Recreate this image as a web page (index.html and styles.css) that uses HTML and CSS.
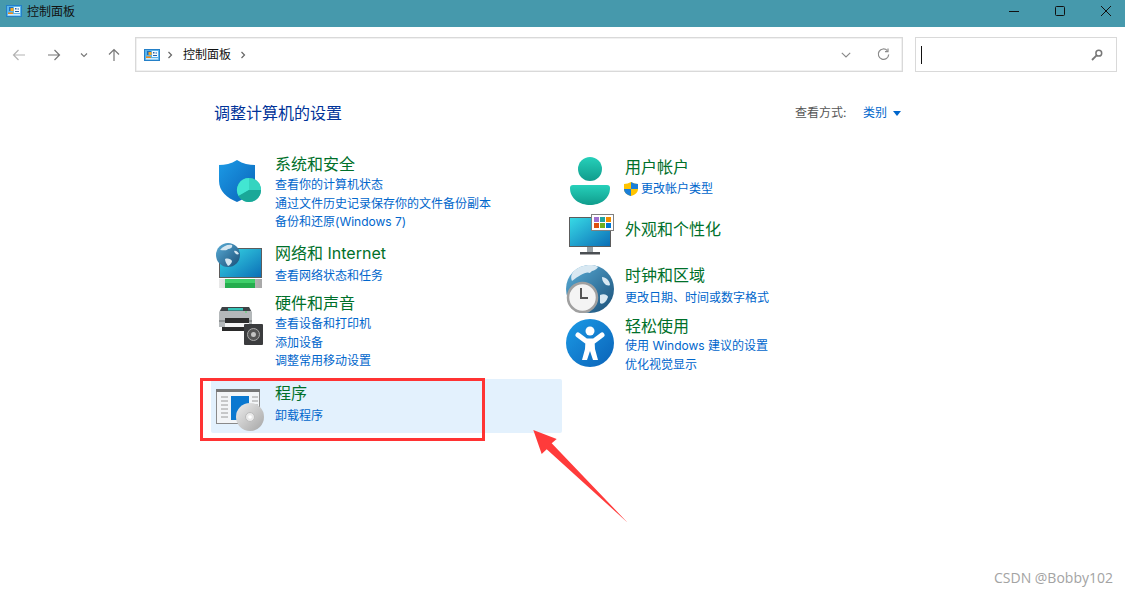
FILE: index.html
```html
<!DOCTYPE html>
<html lang="zh-CN">
<head>
<meta charset="utf-8">
<title>控制面板</title>
<link rel="stylesheet" href="styles.css">
</head>
<body>
<svg class="defs" width="0" height="0" aria-hidden="true">
  <defs>
    <linearGradient id="gBlue" x1="0" y1="0" x2="1" y2="1"><stop offset="0" stop-color="#1c9be6"/><stop offset="1" stop-color="#0a62b8"/></linearGradient>
    <linearGradient id="gScreen" x1="0" y1="0" x2="1" y2="1"><stop offset="0" stop-color="#38dbe6"/><stop offset="1" stop-color="#0b6db6"/></linearGradient>
    <linearGradient id="gTeal" x1="0" y1="0" x2="0" y2="1"><stop offset="0" stop-color="#26d0ba"/><stop offset="1" stop-color="#109c8c"/></linearGradient>
    <linearGradient id="gGlobe" x1="0" y1="0" x2="1" y2="1"><stop offset="0" stop-color="#5aaed8"/><stop offset="1" stop-color="#1a4f78"/></linearGradient>
    <linearGradient id="gDisc" x1="0" y1="0" x2="1" y2="1"><stop offset="0" stop-color="#eeeeee"/><stop offset="1" stop-color="#a5a5a5"/></linearGradient>
    <linearGradient id="gBar" x1="0" y1="0" x2="1" y2="0"><stop offset="0" stop-color="#e8e8e8"/><stop offset="1" stop-color="#a8a8a8"/></linearGradient>
    <symbol id="cp" viewBox="0 0 16 12">
      <rect x="0.500" y="0.500" width="15" height="11" fill="#58b4ec" stroke="#2480c8"/>
      <rect x="8" y="2" width="6" height="6" fill="#f2fafe"/>
      <rect x="2" y="9" width="12" height="1.500" fill="#cfe9fa"/>
      <path d="M3 2h4v4H3z" fill="#1d6fc0"/>
      <path d="M4.500 3h3v3h-3z" fill="#f5a623"/>
      <path d="M2 7.500h5V9H2z" fill="#ef8a17"/>
      <path d="M9 3h1.500v1.500H9zM11.500 3.500H13v1h-1.500zM9 6h4v1H9z" fill="#1f5fa8"/>
    </symbol>
  </defs>
</svg>

<header class="titlebar">
  <div class="title">
    <svg class="title-icon"><use href="#cp"/></svg>
    <span>控制面板</span>
  </div>
  <div class="winctl">
    <svg class="wc" viewBox="0 0 46 27"><path d="M18 11.500h10" stroke="#111" fill="none"/></svg>
    <svg class="wc" viewBox="0 0 46 27"><rect x="18.500" y="6.500" width="9" height="9" rx="1" stroke="#111" fill="none"/></svg>
    <svg class="wc" viewBox="0 0 46 27"><path d="M18 6l10 10M28 6L18 16" stroke="#111" fill="none"/></svg>
  </div>
</header>

<nav class="toolbar">
  <div class="navs">
    <svg class="nav nav-back" viewBox="0 0 14 14"><path d="M13 7H1.500M6.500 2L1.500 7l5 5" fill="none" stroke="#b3b3b3" stroke-width="1.200"/></svg>
    <svg class="nav nav-fwd" viewBox="0 0 14 14"><path d="M1 7h11.500M7.500 2l5 5-5 5" fill="none" stroke="#777" stroke-width="1.200"/></svg>
    <svg class="nav nav-drop" viewBox="0 0 8 6"><path d="M1 1.500l3 3 3-3" fill="none" stroke="#777" stroke-width="1.100"/></svg>
    <svg class="nav nav-up" viewBox="0 0 14 14"><path d="M7 13V1.500M2 6.500l5-5 5 5" fill="none" stroke="#777" stroke-width="1.200"/></svg>
  </div>
  <div class="address">
    <svg class="addr-icon"><use href="#cp"/></svg>
    <svg class="sep sep-first" viewBox="0 0 6 8"><path d="M1.500 1l3 3-3 3" fill="none" stroke="#666" stroke-width="1.200"/></svg>
    <span class="crumb">控制面板</span>
    <svg class="sep" viewBox="0 0 6 8"><path d="M1.500 1l3 3-3 3" fill="none" stroke="#666" stroke-width="1.200"/></svg>
    <span class="grow"></span>
    <svg class="addr-drop" viewBox="0 0 10 6"><path d="M.8.800L5 5 9.200.800" fill="none" stroke="#888" stroke-width="1.100"/></svg>
    <svg class="refresh" viewBox="0 0 13 13"><path d="M10.300 2.600A5.200 5.200 0 1 0 11.700 6.500" fill="none" stroke="#8a8a8a" stroke-width="1.200"/><path d="M11 .6v3H8" fill="none" stroke="#8a8a8a" stroke-width="1.200"/></svg>
  </div>
  <div class="search">
    <span class="caret"></span>
    <svg class="search-icon" viewBox="0 0 12 12"><circle cx="7.800" cy="4.200" r="2.900" fill="none" stroke="#777" stroke-width="1.500"/><path d="M5.600 6.400L1 11" stroke="#777" stroke-width="1.800"/></svg>
  </div>
</nav>

<main class="content">
  <div class="head">
    <h1>调整计算机的设置</h1>
    <div class="view">
      <span class="view-label">查看方式:</span>
      <a class="view-value">类别</a>
      <svg class="view-caret" viewBox="0 0 8 5"><path d="M0 0h8L4 5z" fill="#0066cc"/></svg>
    </div>
  </div>

  <div class="columns">
    <section class="col col-left">
      <article class="item">
        <svg class="icon i-shield" viewBox="0 0 48 48">
          <path d="M21 3C27 7 33 8 39 8V24C39 34 31 41 21 45C11 41 3 34 3 24V8C9 8 15 7 21 3Z" fill="url(#gBlue)"/>
          <circle cx="33" cy="33" r="12" fill="#1fb8a6"/>
          <path d="M33 33V21A12 12 0 0 1 45 33Z" fill="#35d4c0"/>
          <path d="M33 33V21A12 12 0 0 0 22.600 39Z" fill="#42e6d2"/>
          <path d="M33 33L22.600 39A12 12 0 0 0 45 33Z" fill="#1aa898"/>
        </svg>
        <div class="text">
          <h2>系统和安全</h2>
          <a>查看你的计算机状态</a>
          <a>通过文件历史记录保存你的文件备份副本</a>
          <a>备份和还原(Windows 7)</a>
        </div>
      </article>

      <article class="item">
        <svg class="icon i-net" viewBox="0 0 48 48">
          <rect x="3.500" y="6.500" width="42" height="29" fill="url(#gScreen)" stroke="#5c5c5c"/>
          <rect x="3" y="37" width="43" height="9" fill="url(#gBar)"/>
          <rect x="9" y="37" width="30" height="9" fill="#3fd06a"/>
          <rect x="9" y="41" width="30" height="5" fill="#25ad4e"/>
          <circle cx="12" cy="13" r="12" fill="url(#gGlobe)"/>
          <path d="M4 8c3-4 8-6 12-5 1 2-1 4-4 4-1 2-5 1-8 1zM9 17c3-1 6 0 7 2 0 2-3 5-4 5-1-2-3-4-3-7zM18 9c2-1 4 1 5 3-2 1-4 0-5-3z" fill="#d5e6f0"/>
        </svg>
        <div class="text">
          <h2>网络和 Internet</h2>
          <a class="first-2">查看网络状态和任务</a>
        </div>
      </article>

      <article class="item">
        <svg class="icon i-printer" viewBox="0 0 48 48">
          <path d="M6 5H33L36 10V25H3V10Z" fill="#b4b8ba"/>
          <path d="M6 5H33L35 9H4Z" fill="#3d4246"/>
          <rect x="12" y="6" width="15" height="2.500" fill="#35c4b8"/>
          <rect x="3" y="18" width="33" height="2" fill="#8c9092"/>
          <rect x="9" y="16" width="24" height="5" fill="#2c2c2c"/>
          <rect x="9" y="21" width="24" height="4" fill="#f4f4f4"/>
          <rect x="6" y="25" width="30" height="4" fill="#2a2a2a"/>
          <rect x="28" y="22" width="19" height="21" rx="1" fill="#3b3c3e"/>
          <circle cx="37.500" cy="32.500" r="6" fill="#555" stroke="#a8a8a8"/>
          <circle cx="37.500" cy="32.500" r="2.500" fill="#c4c4c4"/>
          <circle cx="30" cy="10" r="0.800" fill="#40e060"/>
        </svg>
        <div class="text">
          <h2>硬件和声音</h2>
          <a>查看设备和打印机</a>
          <a>添加设备</a>
          <a>调整常用移动设置</a>
        </div>
      </article>

      <article class="item item-hover">
        <svg class="icon i-prog" viewBox="0 0 48 48">
          <rect x=".5" y="4.500" width="43" height="34" fill="#f3f5f7" stroke="#8a8a8a"/>
          <rect x="0" y="4" width="44" height="3" fill="#777"/>
          <path d="M5 12h7M5 16h7M5 20h7M5 24h7M5 28h7M5 32h7M36 12h6M36 16h6M36 20h6" stroke="#9a9a9a"/>
          <rect x="15" y="11" width="18" height="24" fill="#0a78d0"/>
          <circle cx="34" cy="32" r="14" fill="url(#gDisc)"/>
          <circle cx="34" cy="32" r="4.500" fill="#e9e9e9" stroke="#bbb"/>
          <circle cx="34" cy="32" r="1.800" fill="#fff"/>
        </svg>
        <div class="text">
          <h2>程序</h2>
          <a class="first-2">卸载程序</a>
        </div>
      </article>
    </section>

    <section class="col col-right">
      <article class="item">
        <svg class="icon i-user" viewBox="0 0 48 48">
          <circle cx="24" cy="12" r="12" fill="url(#gTeal)"/>
          <path d="M4 31Q4 28 7 28H41Q44 28 44 31C44 42 34 48 24 48C14 48 4 42 4 31Z" fill="url(#gTeal)"/>
        </svg>
        <div class="text">
          <h2>用户帐户</h2>
          <a class="first-1 has-shield">
            <svg class="uac" viewBox="0 0 14 14">
              <path d="M7 0C9 1.200 11.500 2 14 2V7C14 10.500 11 13 7 14C3 13 0 10.500 0 7V2C2.500 2 5 1.200 7 0Z" fill="#ffc400"/>
              <path d="M7 0V7H14V2C11.500 2 9 1.200 7 0ZM7 7H0C0 10.500 3 13 7 14Z" fill="#1b7fd8"/>
            </svg>
            更改帐户类型
          </a>
        </div>
      </article>

      <article class="item">
        <svg class="icon i-mon" viewBox="0 0 48 48">
          <rect x="3.500" y="7.500" width="41" height="29" fill="url(#gScreen)" stroke="#5c5c5c"/>
          <rect x="21" y="37" width="6" height="5" fill="#9aa2a6"/>
          <rect x="14" y="42" width="20" height="2.500" fill="#4a4e52"/>
          <rect x="25.500" y="4.500" width="22" height="16" fill="#fff" stroke="#808080"/>
          <rect x="28" y="7" width="5" height="5" fill="#a070d0"/><rect x="34" y="7" width="5" height="5" fill="#20a5a0"/><rect x="40" y="7" width="5" height="5" fill="#f08c00"/>
          <rect x="28" y="13" width="5" height="5" fill="#e05010"/><rect x="34" y="13" width="5" height="5" fill="#70b020"/><rect x="40" y="13" width="5" height="5" fill="#0078d4"/>
        </svg>
        <div class="text text-solo">
          <h2>外观和个性化</h2>
        </div>
      </article>

      <article class="item">
        <svg class="icon i-clock" viewBox="0 0 48 48">
          <circle cx="24" cy="24" r="24" fill="url(#gGlobe)"/>
          <path d="M8 6C14 0 26-2 32 2 30 6 26 5 24 8 20 6 14 10 6 16 4 12 6 8 8 6ZM36 12C40 12 44 16 44 20 41 22 36 18 36 12ZM34 30C38 28 42 30 42 32 40 38 36 40 34 38Z" fill="#d8e8f2"/>
          <circle cx="16.500" cy="32.500" r="14.500" fill="#f4f4f4" stroke="#a0a0a0" stroke-width="2.500"/>
          <path d="M15 23V33H22" fill="none" stroke="#555" stroke-width="2"/>
        </svg>
        <div class="text">
          <h2>时钟和区域</h2>
          <a class="first-2">更改日期、时间或数字格式</a>
        </div>
      </article>

      <article class="item">
        <svg class="icon i-ease" viewBox="0 0 48 48">
          <circle cx="24" cy="24" r="24" fill="url(#gBlue)"/>
          <circle cx="24" cy="12" r="4.500" fill="#fff"/>
          <path d="M12 16L20 22H28L36 16" fill="none" stroke="#fff" stroke-width="5" stroke-linecap="round" stroke-linejoin="round"/>
          <path d="M19.500 21H28.500L29 30L32 41H27L24 32L21 41H16L19 30Z" fill="#fff"/>
        </svg>
        <div class="text">
          <h2>轻松使用</h2>
          <a class="first-0">使用 Windows 建议的设置</a>
          <a>优化视觉显示</a>
        </div>
      </article>
    </section>
  </div>
</main>

<div class="redbox"></div>
<svg class="arrow" viewBox="0 0 100 100"><path d="M3.300 2L26.700 11L21.700 15.300L97.700 94.700L16.700 21.300L11.700 26Z" fill="#ff3b3b"/></svg>
<div class="watermark">CSDN @Bobby102</div>
</body>
</html>
```

FILE: styles.css
```css
* { box-sizing: border-box; }
html, body { margin: 0; height: 100%; }
body {
  position: relative;
  width: 1125px;
  height: 594px;
  overflow: hidden;
  background: #fff;
  font-family: Inter, "Noto Sans CJK SC", sans-serif;
  font-size: 12px;
}
.defs { position: absolute; }

/* title bar */
.titlebar {
  height: 27px;
  background: #4699ac;
  display: flex;
  justify-content: space-between;
}
.title { display: flex; align-items: center; padding: 0 0 3px 6px; color: #111; line-height: 22px; }
.title-icon { width: 16px; height: 12px; margin: 0 5px 3px 0; }
.winctl { display: flex; margin-right: -4px; }
.wc { width: 46px; height: 27px; }

/* toolbar */
.toolbar {
  height: 45px;
  padding-top: 10px;
  display: flex;
  align-items: flex-start;
}
.navs { width: 135px; height: 35px; display: flex; align-items: center; }
.nav { width: 14px; height: 14px; flex: none; }
.nav-back { margin-left: 12px; }
.nav-fwd { margin-left: 21px; }
.nav-drop { width: 8px; height: 6px; margin-left: 19px; }
.nav-up { margin-left: 19px; }

.address {
  width: 768px;
  height: 35px;
  border: 1px solid #d9d9d9;
  display: flex;
  align-items: center;
  color: #111;
  box-shadow: inset 0 0 0 .5px #e4e4e4;
}
.addr-icon { width: 16px; height: 12px; margin-left: 8px; }
.sep { width: 6px; height: 8px; }
.sep-first { margin: 0 10px 0 7px; }
.crumb { margin-right: 9px; line-height: 18px; }
.grow { flex: 1; }
.addr-drop { width: 10px; height: 6px; margin-right: 26px; }
.refresh { width: 13px; height: 13px; margin-right: 12px; }

.search {
  width: 202px;
  height: 35px;
  margin-left: 12px;
  border: 1px solid #d9d9d9;
  display: flex;
  align-items: center;
  justify-content: space-between;
  padding: 0 13px 0 5px;
}
.caret { width: 1px; height: 18px; background: #111; }
.search-icon { width: 12px; height: 12px; }

/* content */
.content { padding: 30px 224px 0 211px; }
.head {
  display: flex;
  justify-content: space-between;
  align-items: center;
  height: 22px;
  padding-left: 3px;
}
h1 { margin: 0; font-size: 16px; font-weight: 400; color: #003399; line-height: 22px; }
.view { display: flex; align-items: center; line-height: 18px; }
.view-label { color: #555; min-width: 56px; margin-right: 12px; }
.view-value { color: #0066cc; margin-right: 6px; }
.view-caret { width: 8px; height: 5px; }

.columns { display: flex; margin-top: 29px; }
.col { display: grid; flex: none; }
.col-left { grid-template-rows: 89px 50px 87px 54px; width: 351px; }
.col-right { grid-template-rows: 62px 46px 51px 60px; padding-top: 3px; margin-left: -1px; width: 300px; }

.item { display: flex; align-items: flex-start; }
.item-hover { background: #e3f1fd; border-radius: 2px; padding-top: 3px; }
.icon { width: 48px; height: 48px; flex: none; margin-left: 5px; margin-right: 11px; }

.i-shield { margin-top: 4px; }
.i-net { margin-top: 0; }
.i-printer { margin-top: 10px; }
.i-prog { margin-top: 3px; }
.i-user { margin-top: 1px; }
.i-mon { margin-top: -8px; }
.i-clock { margin-top: 1px; }
.i-ease { margin-top: 4px; }

.text { display: flex; flex-direction: column; align-items: flex-start; }
h2 { margin: 0; font-size: 16px; font-weight: 400; color: #00702a; line-height: 23px; white-space: nowrap; }
.text a { color: #0066cc; line-height: 18.700px; white-space: nowrap; }
.first-2 { margin-top: 2px; }
.first-1 { margin-top: 1px; }
.first-0 { margin-top: -1px; }
.has-shield { display: flex; align-items: center; margin-left: -1px; }
.uac { width: 14px; height: 14px; margin-right: 3px; }

/* annotations over the page */
.redbox {
  position: absolute;
  left: 200px;
  top: 378px;
  width: 285px;
  height: 63px;
  border: 3px solid #ff3333;
}
.arrow { position: absolute; left: 530px; top: 428px; width: 100px; height: 100px; }
.watermark {
  position: absolute;
  right: 12px;
  top: 569px;
  color: #a3a3a3;
  font-family: "Open Sans", sans-serif;
  font-size: 14px;
  line-height: 18px;
}
```
